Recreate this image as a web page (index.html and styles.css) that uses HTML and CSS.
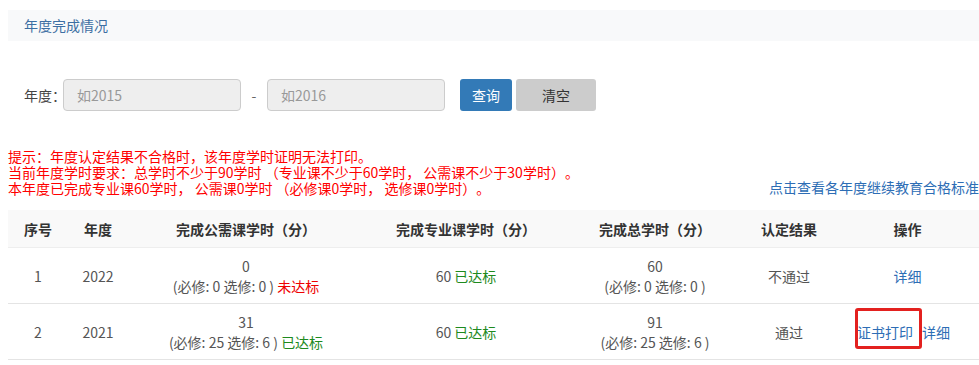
FILE: index.html
```html
<!DOCTYPE html>
<html lang="zh-CN">
<head>
<meta charset="utf-8">
<title>年度完成情况</title>
<link rel="stylesheet" href="styles.css">
</head>
<body>
<div class="page">
  <div class="panel-title">年度完成情况</div>

  <form class="search">
    <label class="search-label">年度：</label>
    <input class="year-input" type="text" placeholder="如2015" disabled>
    <span class="dash">-</span>
    <input class="year-input" type="text" placeholder="如2016" disabled>
    <button type="button" class="btn btn-primary">查询</button>
    <button type="button" class="btn btn-gray">清空</button>
  </form>

  <div class="notice">
    <div class="notice-text">
      <p>提示：年度认定结果不合格时，该年度学时证明无法打印。</p>
      <p>当前年度学时要求：总学时不少于90学时 （专业课不少于60学时， 公需课不少于30学时）。</p>
      <p>本年度已完成专业课60学时， 公需课0学时 （必修课0学时， 选修课0学时）。</p>
    </div>
    <a class="standard-link" href="#">点击查看各年度继续教育合格标准</a>
  </div>

  <table class="records">
    <colgroup>
      <col class="c-no"><col class="c-year"><col class="c-public"><col class="c-major"><col class="c-total"><col class="c-result"><col class="c-op">
    </colgroup>
    <thead>
      <tr>
        <th>序号</th>
        <th>年度</th>
        <th>完成公需课学时（分）</th>
        <th>完成专业课学时（分）</th>
        <th>完成总学时（分）</th>
        <th>认定结果</th>
        <th>操作</th>
      </tr>
    </thead>
    <tbody>
      <tr>
        <td>1</td>
        <td>2022</td>
        <td>0<br>(必修: 0 选修: 0 ) <span class="fail">未达标</span></td>
        <td>60 <span class="pass">已达标</span></td>
        <td>60<br>(必修: 0 选修: 0 )</td>
        <td>不通过</td>
        <td><a href="#">详细</a></td>
      </tr>
      <tr>
        <td>2</td>
        <td>2021</td>
        <td>31<br>(必修: 25 选修: 6 ) <span class="pass">已达标</span></td>
        <td>60 <span class="pass">已达标</span></td>
        <td>91<br>(必修: 25 选修: 6 )</td>
        <td>通过</td>
        <td class="ops"><span class="marked"><a href="#">证书打印</a><span class="mark-box"></span></span><a href="#">详细</a></td>
      </tr>
    </tbody>
  </table>
</div>
</body>
</html>
```

FILE: styles.css
```css
html, body {
  margin: 0;
  padding: 0;
  background: #fff;
}

body {
  font-family: "Noto Sans CJK SC", "Microsoft YaHei", sans-serif;
  font-size: 14px;
  color: #555;
  overflow: hidden;
  text-spacing-trim: space-all;
}

.page {
  width: 971px;
  padding: 10px 0 0 8px;
}

.panel-title {
  height: 31px;
  line-height: 31px;
  padding-left: 16px;
  background: #f8f9fa;
  color: #3d6fa3;
  font-size: 14px;
}

/* search row */
.search {
  display: flex;
  align-items: center;
  margin: 38px 0 0 16px;
  height: 32px;
}

.search-label {
  flex: 0 0 39px;
  width: 39px;
  white-space: nowrap;
  color: #444;
}

.year-input {
  box-sizing: border-box;
  width: 178px;
  height: 32px;
  padding: 0 13px;
  border: 1px solid #ccc;
  border-radius: 4px;
  background: #eee;
  font: inherit;
  color: #999;
}

.year-input::placeholder {
  color: #999;
}

.dash {
  width: 26px;
  text-align: center;
  color: #666;
}

.btn {
  height: 32px;
  border: none;
  border-radius: 3px;
  font: inherit;
  padding: 0;
}

.btn-primary {
  margin-left: 15px;
  width: 52px;
  background: #337ab7;
  color: #fff;
}

.btn-gray {
  margin-left: 4px;
  width: 80px;
  background: #ccc;
  color: #333;
}

/* notice */
.notice {
  display: flex;
  justify-content: space-between;
  align-items: flex-end;
  margin-top: 37px;
  color: #f00;
  line-height: 16px;
}

.notice p {
  margin: 0;
  white-space: nowrap;
}

.standard-link {
  color: #2d6db5;
  text-decoration: none;
  white-space: nowrap;
  position: relative;
  top: -1px;
}

/* records table */
.records {
  width: 971px;
  margin-top: 14px;
  border-collapse: collapse;
  table-layout: fixed;
}

.c-no { width: 60px; }
.c-year { width: 60px; }
.c-public { width: 236px; }
.c-major { width: 204px; }
.c-total { width: 174px; }
.c-result { width: 94px; }
.c-op { width: 143px; }

.records th {
  height: 37px;
  padding: 0;
  background: #f9f9f9;
  color: #333;
  font-weight: bold;
  text-align: center;
  border-bottom: 1px solid #eee;
}

.records td {
  height: 55px;
  padding: 0;
  text-align: center;
  line-height: 20px;
  border-bottom: 1px solid #e4e4e4;
  color: #555;
}

.records td.ops {
  padding-right: 8px;
}

.records a {
  color: #2d6db5;
  text-decoration: none;
}

.fail { color: #e00; }
.pass { color: #1e8a1e; }

.ops .marked + a {
  margin-left: 9px;
}

.marked {
  position: relative;
}

/* red highlight frame around the print link */
.mark-box {
  position: absolute;
  left: -2px;
  right: -9px;
  top: -14px;
  bottom: -7px;
  border: 3px solid #e3211f;
  border-radius: 3px;
}
```
